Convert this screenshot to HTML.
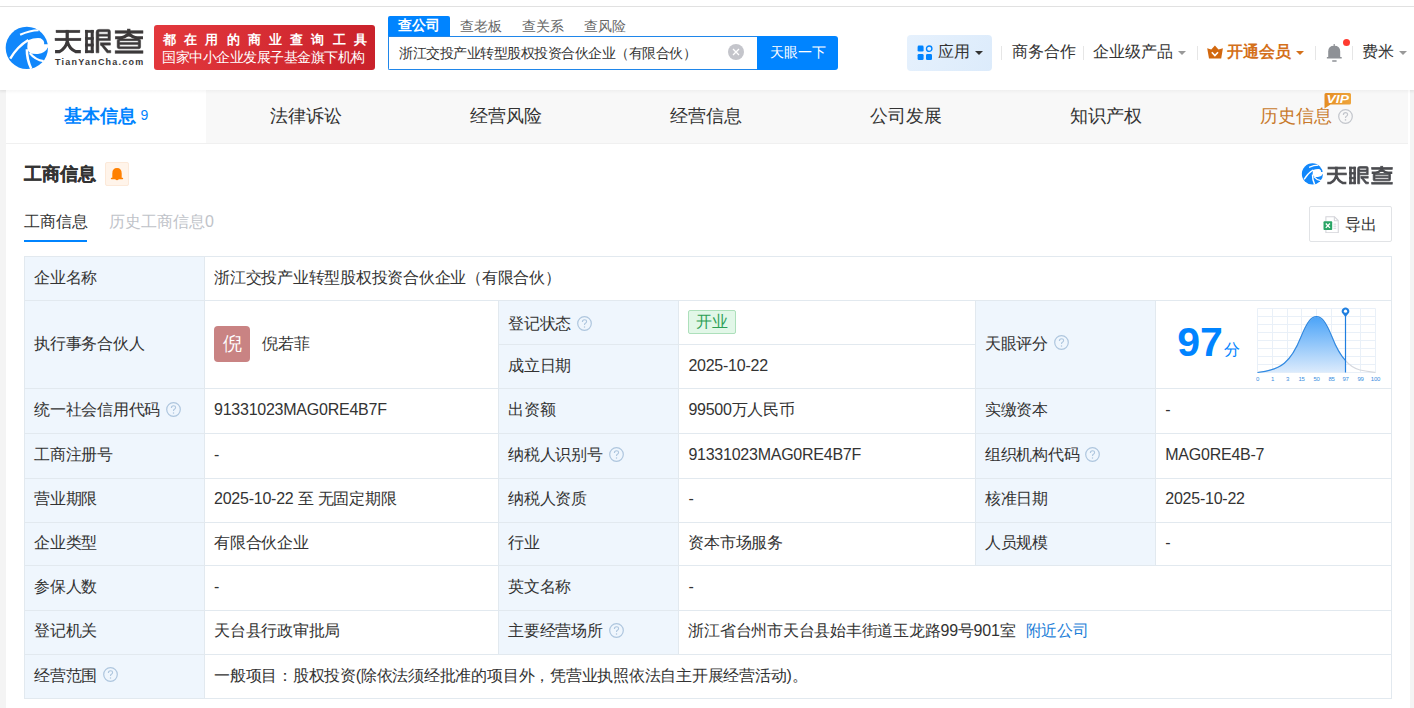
<!DOCTYPE html>
<html><head><meta charset="utf-8">
<style>
*{box-sizing:border-box;margin:0;padding:0}
html,body{width:1414px;height:708px;overflow:hidden;background:#f4f4f4;font-family:"Liberation Sans",sans-serif;color:#333}
.abs{position:absolute}
#topline{position:absolute;left:0;top:0;width:1414px;height:7px;background:#fff;border-bottom:1px solid #e3e3e3}
#header{position:absolute;left:0;top:7px;width:1414px;height:83px;background:#fff;box-shadow:0 1px 3px rgba(0,0,0,0.06)}
.badge{position:absolute;left:154px;top:25px;width:221px;height:45px;border-radius:3px;background:linear-gradient(100deg,#e3383d,#c9212a);color:#fff}
.badge .l1{position:absolute;left:9px;top:4.5px;font-size:13px;font-weight:bold;letter-spacing:8.2px;white-space:nowrap;line-height:20px}
.badge .l2{position:absolute;left:8px;top:22px;font-size:14px;white-space:nowrap;line-height:20px;letter-spacing:-0.5px}
.stabs{position:absolute;left:388px;top:16px;height:20px;font-size:14px;line-height:20px}
.stab{position:absolute;top:0;width:62px;height:20px;text-align:center;color:#666}
.stab.on{background:#0084ff;color:#fff;border-radius:2px 2px 0 0;font-weight:bold;line-height:19px}
.sinput{position:absolute;left:388px;top:36px;width:370px;height:34px;border:1px solid #1f86ea;border-right:none;background:#fff;border-radius:0 0 0 2px}
.sinput .t{position:absolute;left:10px;top:7px;font-size:14px;line-height:18px;color:#333;white-space:nowrap;letter-spacing:-0.5px}
.clr{position:absolute;left:719px;top:43px;width:17px;height:17px;border-radius:50%;background:#c4c5cb}
.sbtn{position:absolute;left:757px;top:36px;width:81px;height:34px;background:#0084ff;color:#fff;font-size:14px;line-height:32px;text-align:center;border-radius:0 3px 3px 0}
.app{position:absolute;left:907px;top:35px;width:85px;height:36px;border-radius:4px;background:linear-gradient(120deg,#e6f1fd,#dcebfb)}
.nav{position:absolute;top:42px;font-size:16px;line-height:20px;white-space:nowrap;color:#333}
.sep{position:absolute;top:46px;width:1px;height:14px;background:#e6e6e6}
.caret{position:absolute;width:0;height:0;border-left:4px solid transparent;border-right:4px solid transparent;border-top:4px solid #999}

#card{position:absolute;left:6px;top:90px;width:1404px;height:640px;background:#fff}
.tabs{position:absolute;left:0;top:0;width:1402px;height:54px;background:#f8f8f8;border-bottom:1px solid #f0f0f0}
.tab{position:absolute;top:0;width:200px;height:53px;line-height:53px;text-align:center;font-size:18px;color:#333}
.tab.on{background:#fff;color:#0084ff;font-weight:bold}

table.info{position:absolute;left:18px;top:166px;border-collapse:collapse;font-size:16px;letter-spacing:-0.24px;color:#333;table-layout:fixed}
table.info td{border:1px solid #e2e9ef;height:44.2px;padding:0 9px 2px 9px;vertical-align:middle;white-space:nowrap;line-height:20px}
table.info td.k{background:#eff6fd}
.qi{display:inline-block;vertical-align:top;position:relative;top:1.5px;margin-left:6px}
.qold{display:inline-block;width:15px;height:15px;border:1px solid #bcd3ea;border-radius:50%;color:#a8c2dc;font-size:10px;line-height:13px;text-align:center;vertical-align:top;position:relative;top:2.5px;margin-left:6px;letter-spacing:0;font-family:"Liberation Sans",sans-serif}
.av{display:inline-block;width:36px;height:36px;border-radius:4px;background:#c98383;color:#fff;font-size:19px;letter-spacing:0;line-height:36px;text-align:center;vertical-align:middle;margin-right:12px}
.tag{display:inline-block;height:24px;line-height:22px;padding:0 7px;margin-left:0;border:1px solid #ade0bb;background:#e2f7e8;color:#2e9f56;border-radius:2px;letter-spacing:0}
table.info tr:nth-child(1) td{height:44px}
table.info tr:nth-child(2) td{height:44px}
table.info tr:nth-child(3) td{height:44px}
table.info tr:nth-child(4) td{height:45px}
table.info tr:nth-child(5) td{height:45px}
table.info tr:nth-child(6) td{height:43.5px}
table.info tr:nth-child(7) td{height:43.5px}
table.info tr:nth-child(8) td{height:44.5px}
table.info tr:nth-child(9) td{height:44.5px}
table.info tr:nth-child(10) td{height:44px}
</style></head><body>
<div id="topline"></div>
<div id="header">
</div>
<svg class="abs" style="left:4px;top:24px" width="48" height="48" viewBox="0 0 708 708">
 <circle cx="337" cy="352" r="312" fill="#1187fb"/>
 <path d="M352 238 Q450 200 540 210 Q600 240 592 298 L700 298 L700 342 L652 340 Q610 430 500 442 Q420 445 380 425 Q338 385 344 330 Z" fill="#fff"/>
 <path d="M92 510 Q200 330 358 236" stroke="#fff" stroke-width="36" fill="none"/>
 <path d="M238 158 Q380 95 510 92" stroke="#fff" stroke-width="32" fill="none"/>
 <path d="M338 372 Q335 520 402 660" stroke="#fff" stroke-width="38" fill="none"/>
 <path d="M380 430 Q460 530 585 548" stroke="#fff" stroke-width="34" fill="none"/>
</svg>
<svg class="abs" style="left:52px;top:26px" width="96" height="32" viewBox="0 0 1414 471">
<g fill="#3c393a" stroke="#3c393a" stroke-width="8">
 <rect x="60" y="62" width="350" height="36"/>
 <rect x="45" y="180" width="380" height="36"/>
 <rect x="205" y="62" width="40" height="154"/>
 <path d="M225 200 L225 225 Q205 330 110 377 L45 377 M225 225 Q250 330 350 377 L425 377" fill="none" stroke="#3c393a" stroke-width="46"/>
 <rect x="490" y="62" width="36" height="333"/>
 <rect x="574" y="62" width="36" height="333"/>
 <rect x="490" y="62" width="120" height="33"/>
 <rect x="490" y="168" width="120" height="32"/>
 <rect x="490" y="264" width="120" height="32"/>
 <rect x="490" y="362" width="120" height="33"/>
 <path d="M690 50 L830 50 Q860 50 860 80 L860 215 L690 215 L690 395 L650 395 L650 90 Q650 50 690 50 Z M690 85 L690 120 L825 120 L825 85 Z M690 150 L690 185 L825 185 L825 150 Z" fill-rule="evenodd"/>
 <rect x="715" y="248" width="145" height="33"/>
 <path d="M720 281 L760 281 L830 360 L865 360 L865 395 L810 395 Z"/>
 <rect x="930" y="70" width="410" height="36"/>
 <rect x="1110" y="45" width="40" height="105"/>
 <path d="M1130 112 Q1070 172 1000 174 L930 174 M1130 112 Q1190 172 1260 174 L1340 174" fill="none" stroke="#3c393a" stroke-width="44"/>
 <path d="M990 190 L1280 190 Q1305 190 1305 215 L1305 310 Q1305 335 1280 335 L990 335 Q960 335 960 310 L960 215 Q960 190 990 190 Z M996 216 L996 244 L1270 244 L1270 216 Z M996 274 L996 306 L1270 306 L1270 274 Z" fill-rule="evenodd"/>
 <rect x="930" y="365" width="410" height="36"/>
</g>
</svg>
<div class="abs" style="left:55px;top:56px;font-size:9px;font-weight:bold;color:#3b3838;line-height:12px;white-space:nowrap;letter-spacing:1.22px">TianYanCha.com</div>

<div class="badge" style="top:25px"><div class="l1">都在用的商业查询工具</div><div class="l2">国家中小企业发展子基金旗下机构</div></div>
<div class="stabs">
 <div class="stab on" style="left:0">查公司</div>
 <div class="stab" style="left:62px">查老板</div>
 <div class="stab" style="left:124px">查关系</div>
 <div class="stab" style="left:186px">查风险</div>
</div>
<div class="sinput"><div class="t">浙江交投产业转型股权投资合伙企业（有限合伙）</div></div>

<svg class="abs" style="left:917px;top:45px;z-index:2" width="16" height="16" viewBox="0 0 16 16">
 <rect x="0.6" y="0.6" width="6" height="6" rx="1.3" fill="#0084ff"/>
 <circle cx="12.2" cy="3.7" r="2.7" fill="none" stroke="#0084ff" stroke-width="1.4"/>
 <rect x="0.6" y="9" width="6" height="6" rx="1.3" fill="#0084ff"/>
 <rect x="9" y="9" width="6" height="6" rx="1.3" fill="#0084ff"/>
</svg>
<svg class="abs" style="left:1207px;top:45px" width="16" height="14" viewBox="0 0 16 14">
 <path d="M0.2 3.2 L4.3 4.6 L7.9 0.4 L11.5 4.6 L15.9 3.2 L14.2 13.4 L2 13.4 Z" fill="#d2680f"/>
 <path d="M4.8 7.2 L7.9 10.6 L11 7.2" fill="none" stroke="#fff" stroke-width="1.6"/>
</svg>
<svg class="abs" style="left:1326px;top:43px" width="17" height="20" viewBox="0 0 17 20">
 <rect x="7.6" y="1" width="1.2" height="3" fill="#8e9196"/>
 <path d="M2.2 14.2 L2.2 8.6 Q2.2 2.7 8.2 2.7 Q14.2 2.7 14.2 8.6 L14.2 14.2 Z" fill="#8e9196"/>
 <rect x="0.8" y="14" width="15" height="1.6" rx="0.6" fill="#8e9196"/>
 <rect x="6" y="17.2" width="4.8" height="1.6" rx="0.8" fill="#8e9196"/>
</svg>
<div class="abs" style="left:1343px;top:39px;width:7px;height:7px;border-radius:50%;background:#ff3b30"></div>
<svg class="abs" style="left:728px;top:44px" width="16" height="16" viewBox="0 0 16 16">
 <circle cx="8" cy="8" r="8" fill="#c4c5cb"/>
 <path d="M5 5 L11 11 M11 5 L5 11" stroke="#fff" stroke-width="1.3"/>
</svg>

<div class="sbtn">天眼一下</div>
<div class="app"></div>
<div class="nav" style="left:938px">应用</div>
<div class="caret" style="left:975px;top:51px;border-top-color:#333"></div>
<div class="sep" style="left:1001px"></div>
<div class="nav" style="left:1012px">商务合作</div>
<div class="sep" style="left:1083px"></div>
<div class="nav" style="left:1093px">企业级产品</div>
<div class="caret" style="left:1178px;top:51px"></div>
<div class="sep" style="left:1197px"></div>
<div class="nav" style="left:1227px;color:#d4701a;font-weight:bold">开通会员</div>
<div class="caret" style="left:1296px;top:51px;border-top-color:#d4701a"></div>
<div class="sep" style="left:1315px"></div>
<div class="sep" style="left:1352px"></div>
<div class="nav" style="left:1362px">费米</div>
<div class="caret" style="left:1399px;top:51px"></div>

<div id="card">
 <div class="tabs">
  <div class="tab on" style="left:0">基本信息 <span style="font-size:14px;font-weight:normal;position:relative;top:-2px">9</span></div>
  <div class="tab" style="left:200px">法律诉讼</div>
  <div class="tab" style="left:400px">经营风险</div>
  <div class="tab" style="left:600px">经营信息</div>
  <div class="tab" style="left:800px">公司发展</div>
  <div class="tab" style="left:1000px">知识产权</div>
  <div class="tab" style="left:1200px;color:#c87a2c;text-align:left;padding-left:54px">历史信息</div>
  <svg class="abs" style="left:1332px;top:18.5px" width="15" height="15" viewBox="0 0 15 15"><circle cx="7.5" cy="7.5" r="6.8" fill="none" stroke="#c3c6cc" stroke-width="1.2"/><path d="M5.4 5.9 Q5.4 3.7 7.5 3.7 Q9.6 3.7 9.6 5.6 Q9.6 6.7 8.4 7.3 Q7.5 7.8 7.5 8.9" fill="none" stroke="#c3c6cc" stroke-width="1.2"/><circle cx="7.5" cy="10.9" r="0.8" fill="#c3c6cc"/></svg>
  <svg class="abs" style="left:1317px;top:2px" width="29" height="17" viewBox="0 0 29 17"><defs><linearGradient id="vg" x1="0" x2="1"><stop offset="0" stop-color="#e58d22"/><stop offset="1" stop-color="#eea43c"/></linearGradient></defs><path d="M3 1 L26.5 1 Q28 1 28 2.5 L28 11 Q28 12.5 26.5 12.5 L7.5 12.5 L1.5 16.5 L1.5 2.5 Q1.5 1 3 1 Z" fill="url(#vg)"/><text x="3.6" y="10.8" font-size="10.5" font-weight="bold" font-style="italic" textLength="22.3" lengthAdjust="spacingAndGlyphs" fill="#fff" font-family="Liberation Sans">VIP</text></svg>
 </div>
</div>


<div class="abs" style="left:24px;top:160.5px;font-size:18px;font-weight:bold;line-height:26px;color:#333;white-space:nowrap;-webkit-text-stroke:0.3px #333">工商信息</div>
<div class="abs" style="left:105px;top:162px;width:24px;height:24px;background:#fff4ea;border:1px solid #fce9d9;border-radius:2px"></div>
<svg class="abs" style="left:110px;top:166.5px" width="14" height="15" viewBox="0 0 14 15">
 <path d="M2.3 11.5 L2.3 6.5 Q2.3 1 7 1 Q11.7 1 11.7 6.5 L11.7 11.5 Z" fill="#ff8000"/>
 <rect x="0.8" y="10.8" width="12.4" height="1.4" rx="0.7" fill="#ff8000"/>
 <path d="M5.2 12 Q7 14.6 8.8 12 Z" fill="#ff8000"/>
</svg>
<svg class="abs" style="left:1301px;top:162px" width="24" height="24" viewBox="0 0 708 708">
 <circle cx="337" cy="352" r="312" fill="#1187fb"/>
 <path d="M352 238 Q450 200 540 210 Q600 240 592 298 L700 298 L700 342 L652 340 Q610 430 500 442 Q420 445 380 425 Q338 385 344 330 Z" fill="#fff"/>
 <path d="M92 510 Q200 330 358 236" stroke="#fff" stroke-width="40" fill="none"/>
 <path d="M238 158 Q380 95 510 92" stroke="#fff" stroke-width="36" fill="none"/>
 <path d="M338 372 Q335 520 402 660" stroke="#fff" stroke-width="42" fill="none"/>
 <path d="M380 430 Q460 530 585 548" stroke="#fff" stroke-width="36" fill="none"/>
</svg>
<svg class="abs" style="left:1324.7px;top:163.7px" width="71" height="23.65" viewBox="0 0 1414 471">
<g fill="#4b4c50" stroke="#4b4c50" stroke-width="14">
 <rect x="60" y="62" width="350" height="36"/>
 <rect x="45" y="180" width="380" height="36"/>
 <rect x="205" y="62" width="40" height="154"/>
 <path d="M225 200 L225 225 Q205 330 110 377 L45 377 M225 225 Q250 330 350 377 L425 377" fill="none" stroke="#4b4c50" stroke-width="50"/>
 <rect x="490" y="62" width="36" height="333"/>
 <rect x="574" y="62" width="36" height="333"/>
 <rect x="490" y="62" width="120" height="33"/>
 <rect x="490" y="168" width="120" height="32"/>
 <rect x="490" y="264" width="120" height="32"/>
 <rect x="490" y="362" width="120" height="33"/>
 <path d="M690 50 L830 50 Q860 50 860 80 L860 215 L690 215 L690 395 L650 395 L650 90 Q650 50 690 50 Z M690 85 L690 120 L825 120 L825 85 Z M690 150 L690 185 L825 185 L825 150 Z" fill-rule="evenodd"/>
 <rect x="715" y="248" width="145" height="33"/>
 <path d="M720 281 L760 281 L830 360 L865 360 L865 395 L810 395 Z"/>
 <rect x="930" y="70" width="410" height="36"/>
 <rect x="1110" y="45" width="40" height="105"/>
 <path d="M1130 112 Q1070 172 1000 174 L930 174 M1130 112 Q1190 172 1260 174 L1340 174" fill="none" stroke="#4b4c50" stroke-width="48"/>
 <path d="M990 190 L1280 190 Q1305 190 1305 215 L1305 310 Q1305 335 1280 335 L990 335 Q960 335 960 310 L960 215 Q960 190 990 190 Z M996 216 L996 244 L1270 244 L1270 216 Z M996 274 L996 306 L1270 306 L1270 274 Z" fill-rule="evenodd"/>
 <rect x="930" y="365" width="410" height="36"/>
</g>
</svg>
<div class="abs" style="left:24px;top:212px;font-size:16px;line-height:20px;color:#333;white-space:nowrap">工商信息</div>
<div class="abs" style="left:24px;top:240px;width:63px;height:2px;background:#0084ff"></div>
<div class="abs" style="left:109px;top:212px;font-size:16px;line-height:20px;color:#bfc3c9;white-space:nowrap">历史工商信息0</div>
<div class="abs" style="left:1309px;top:206px;width:83px;height:36px;border:1px solid #e1e3e6;border-radius:2px;background:#fff"></div>
<svg class="abs" style="left:1323.3px;top:215.8px" width="16.5" height="17" viewBox="0 0 16 16.5">
 <path d="M2.8 0.8 L11.2 0.8 L14.8 4.4 L14.8 16.2 L2.8 16.2 Z" fill="#fff" stroke="#d3d4d9" stroke-width="1"/>
 <path d="M11 0.8 L11 4.6 L14.8 4.6" fill="none" stroke="#d3d4d9" stroke-width="1"/>
 <rect x="10.2" y="7.4" width="2.6" height="1" fill="#d3d4d9"/><rect x="10.2" y="9.4" width="2.6" height="1" fill="#d3d4d9"/><rect x="10.2" y="11.4" width="2.6" height="1" fill="#d3d4d9"/>
 <rect x="0.5" y="5.2" width="8.4" height="8.4" rx="0.8" fill="#2aa566"/>
 <path d="M2.7 7.3 L6.7 11.5 M6.7 7.3 L2.7 11.5" stroke="#fff" stroke-width="1.3"/>
</svg>
<div class="abs" style="left:1345px;top:215px;font-size:16px;line-height:20px;color:#333;white-space:nowrap">导出</div>
<div class="abs" style="left:0;top:90px;width:1414px;height:4px;background:linear-gradient(rgba(0,0,0,0.035),rgba(0,0,0,0))"></div>
<table class="info" style="left:24px;top:256px">
<colgroup><col style="width:180px"><col style="width:294.2px"><col style="width:180.2px"><col style="width:296.4px"><col style="width:180.5px"><col style="width:235.7px"></colgroup>
<tr><td class="k">企业名称</td><td colspan="5">浙江交投产业转型股权投资合伙企业（有限合伙）</td></tr>
<tr><td class="k" rowspan="2">执行事务合伙人</td><td rowspan="2"><span class="av">倪</span><span style="vertical-align:middle">倪若菲</span></td><td class="k" style="padding-top:3px;padding-bottom:0">登记状态<svg class="qi" width="15" height="15" viewBox="0 0 15 15"><circle cx="7.5" cy="7.5" r="6.8" fill="none" stroke="#aec6de" stroke-width="1.2"/><path d="M5.4 5.9 Q5.4 3.7 7.5 3.7 Q9.6 3.7 9.6 5.6 Q9.6 6.7 8.4 7.3 Q7.5 7.8 7.5 8.9" fill="none" stroke="#aec6de" stroke-width="1.1"/><circle cx="7.5" cy="10.9" r="0.75" fill="#aec6de"/></svg></td><td><span class="tag">开业</span></td><td class="k" rowspan="2">天眼评分<svg class="qi" width="15" height="15" viewBox="0 0 15 15"><circle cx="7.5" cy="7.5" r="6.8" fill="none" stroke="#aec6de" stroke-width="1.2"/><path d="M5.4 5.9 Q5.4 3.7 7.5 3.7 Q9.6 3.7 9.6 5.6 Q9.6 6.7 8.4 7.3 Q7.5 7.8 7.5 8.9" fill="none" stroke="#aec6de" stroke-width="1.1"/><circle cx="7.5" cy="10.9" r="0.75" fill="#aec6de"/></svg></td><td rowspan="2" style="position:relative;padding:0"><div class="abs" style="left:21px;top:17px;font-size:41px;font-weight:bold;color:#0084ff;line-height:48px;letter-spacing:0">97</div><div class="abs" style="left:68px;top:39px;font-size:16px;color:#0084ff;line-height:20px;letter-spacing:0">分</div>
<svg class="abs" style="left:99.6px;top:6px" width="126" height="80" viewBox="0 0 126 80">
<defs><linearGradient id="cg" x1="0" y1="0" x2="0" y2="1"><stop offset="0" stop-color="#4aa3f8"/><stop offset="1" stop-color="#dcebfc"/></linearGradient></defs>
<g stroke="#e9f0f8" stroke-width="1" fill="none">
<path d="M1.5 1.5 H119.5 M1.5 9.5 H119.5 M1.5 17.5 H119.5 M1.5 25.5 H119.5 M1.5 33.5 H119.5 M1.5 41.5 H119.5 M1.5 49.5 H119.5 M1.5 57.5 H119.5 M1.5 65.5 H119.5"/>
<path d="M1.5 1.5 V65.5 M16.5 1.5 V65.5 M31.5 1.5 V65.5 M45.5 1.5 V65.5 M60.5 1.5 V65.5 M75.5 1.5 V65.5 M89.5 1.5 V65.5 M104.5 1.5 V65.5 M119.5 1.5 V65.5"/>
</g>
<path id="curve" d="M1.5 65.5 C25 63 35 55 45 30 C52 13 56 9.5 60.5 9.5 C65 9.5 69 13 76 30 C83 48 92 60 104 63 C110 64.5 116 65 119.5 65.5" fill="none"/>
<clipPath id="cl"><rect x="0" y="0" width="89.5" height="80"/></clipPath>
<path d="M1.5 65.5 C25 63 35 55 45 30 C52 13 56 9.5 60.5 9.5 C65 9.5 69 13 76 30 C83 48 92 60 104 63 C110 64.5 116 65 119.5 65.5 Z" fill="url(#cg)" clip-path="url(#cl)"/>
<path d="M1.5 65.5 C25 63 35 55 45 30 C52 13 56 9.5 60.5 9.5 C65 9.5 69 13 76 30 C83 48 92 60 104 63 C110 64.5 116 65 119.5 65.5" fill="none" stroke="#d5d8de" stroke-width="1.2"/>
<path d="M1.5 65.5 C25 63 35 55 45 30 C52 13 56 9.5 60.5 9.5 C65 9.5 69 13 76 30 C83 48 92 60 104 63 C110 64.5 116 65 119.5 65.5" fill="none" stroke="#2d8ae6" stroke-width="1.2" clip-path="url(#cl)"/>
<path d="M89.5 8 V65.5" stroke="#1f7fe0" stroke-width="1.2"/>
<path d="M89.5 10 L86.6 6.6 A3.7 3.7 0 1 1 92.4 6.6 Z" fill="#1f7fe0"/>
<circle cx="89.5" cy="4.2" r="1.6" fill="#fff"/>
<g font-size="6" fill="#3b8ee0" font-family="Liberation Sans" text-anchor="middle">
<text x="1.5" y="74">0</text><text x="16.5" y="74">1</text><text x="31.5" y="74">3</text><text x="45.5" y="74">15</text><text x="60.5" y="74">50</text><text x="75.5" y="74">85</text><text x="89.5" y="74">97</text><text x="104.5" y="74">99</text><text x="119.5" y="74">100</text>
</g></svg></td></tr>
<tr><td class="k">成立日期</td><td>2025-10-22</td></tr>
<tr><td class="k">统一社会信用代码<svg class="qi" width="15" height="15" viewBox="0 0 15 15"><circle cx="7.5" cy="7.5" r="6.8" fill="none" stroke="#aec6de" stroke-width="1.2"/><path d="M5.4 5.9 Q5.4 3.7 7.5 3.7 Q9.6 3.7 9.6 5.6 Q9.6 6.7 8.4 7.3 Q7.5 7.8 7.5 8.9" fill="none" stroke="#aec6de" stroke-width="1.1"/><circle cx="7.5" cy="10.9" r="0.75" fill="#aec6de"/></svg></td><td>91331023MAG0RE4B7F</td><td class="k">出资额</td><td>99500万人民币</td><td class="k">实缴资本</td><td>-</td></tr>
<tr><td class="k">工商注册号</td><td>-</td><td class="k">纳税人识别号<svg class="qi" width="15" height="15" viewBox="0 0 15 15"><circle cx="7.5" cy="7.5" r="6.8" fill="none" stroke="#aec6de" stroke-width="1.2"/><path d="M5.4 5.9 Q5.4 3.7 7.5 3.7 Q9.6 3.7 9.6 5.6 Q9.6 6.7 8.4 7.3 Q7.5 7.8 7.5 8.9" fill="none" stroke="#aec6de" stroke-width="1.1"/><circle cx="7.5" cy="10.9" r="0.75" fill="#aec6de"/></svg></td><td>91331023MAG0RE4B7F</td><td class="k">组织机构代码<svg class="qi" width="15" height="15" viewBox="0 0 15 15"><circle cx="7.5" cy="7.5" r="6.8" fill="none" stroke="#aec6de" stroke-width="1.2"/><path d="M5.4 5.9 Q5.4 3.7 7.5 3.7 Q9.6 3.7 9.6 5.6 Q9.6 6.7 8.4 7.3 Q7.5 7.8 7.5 8.9" fill="none" stroke="#aec6de" stroke-width="1.1"/><circle cx="7.5" cy="10.9" r="0.75" fill="#aec6de"/></svg></td><td>MAG0RE4B-7</td></tr>
<tr><td class="k">营业期限</td><td>2025-10-22 至 无固定期限</td><td class="k">纳税人资质</td><td>-</td><td class="k">核准日期</td><td>2025-10-22</td></tr>
<tr><td class="k">企业类型</td><td>有限合伙企业</td><td class="k">行业</td><td>资本市场服务</td><td class="k">人员规模</td><td>-</td></tr>
<tr><td class="k">参保人数</td><td>-</td><td class="k">英文名称</td><td colspan="3">-</td></tr>
<tr><td class="k">登记机关</td><td>天台县行政审批局</td><td class="k">主要经营场所<svg class="qi" width="15" height="15" viewBox="0 0 15 15"><circle cx="7.5" cy="7.5" r="6.8" fill="none" stroke="#aec6de" stroke-width="1.2"/><path d="M5.4 5.9 Q5.4 3.7 7.5 3.7 Q9.6 3.7 9.6 5.6 Q9.6 6.7 8.4 7.3 Q7.5 7.8 7.5 8.9" fill="none" stroke="#aec6de" stroke-width="1.1"/><circle cx="7.5" cy="10.9" r="0.75" fill="#aec6de"/></svg></td><td colspan="3">浙江省台州市天台县始丰街道玉龙路99号901室 <span style="color:#1f7fd8;margin-left:6px">附近公司</span></td></tr>
<tr><td class="k">经营范围<svg class="qi" width="15" height="15" viewBox="0 0 15 15"><circle cx="7.5" cy="7.5" r="6.8" fill="none" stroke="#aec6de" stroke-width="1.2"/><path d="M5.4 5.9 Q5.4 3.7 7.5 3.7 Q9.6 3.7 9.6 5.6 Q9.6 6.7 8.4 7.3 Q7.5 7.8 7.5 8.9" fill="none" stroke="#aec6de" stroke-width="1.1"/><circle cx="7.5" cy="10.9" r="0.75" fill="#aec6de"/></svg></td><td colspan="5">一般项目：股权投资(除依法须经批准的项目外，凭营业执照依法自主开展经营活动)。</td></tr>
</table>
</body></html>
